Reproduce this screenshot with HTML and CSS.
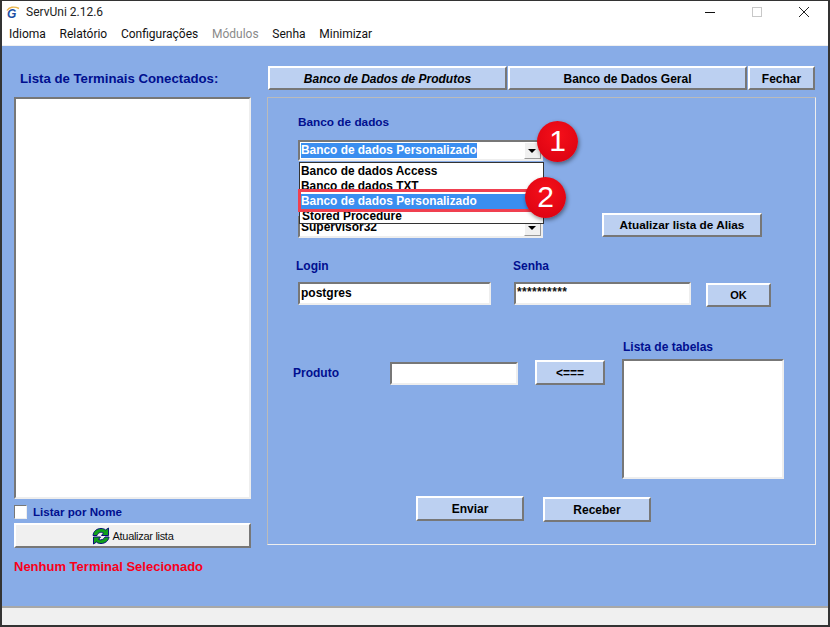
FILE: index.html
```html
<!DOCTYPE html>
<html lang="pt-BR">

<head>
  <meta charset="UTF-8">
  <title>ServUni 2.12.6</title>
  <link rel="stylesheet" href="styles.css">
</head>

<body>
  <div class="window">
    <div class="titlebar">
      <span class="logo">
        <svg width="14" height="14" viewBox="0 0 14 14">
          <path d="M1 5.5 C3 2 8 1 13 3.5" fill="none" stroke="#eab64c" stroke-width="1.4"/>
        </svg>
        <span class="logo-g">G</span>
      </span>
      <span class="title">ServUni 2.12.6</span>
      <div class="caption-btns">
        <svg width="12" height="12" viewBox="0 0 12 12"><path d="M1 6.5H11" stroke="#111" stroke-width="1"/></svg>
        <svg width="12" height="12" viewBox="0 0 12 12"><rect x="1.5" y="1.5" width="9" height="9" fill="none" stroke="#c8c8c8"/></svg>
        <svg width="12" height="12" viewBox="0 0 12 12"><path d="M1 1L11 11M11 1L1 11" stroke="#222" stroke-width="1"/></svg>
      </div>
    </div>
    <div class="menubar">
      <span>Idioma</span>
      <span>Relatório</span>
      <span>Configurações</span>
      <span class="disabled">Módulos</span>
      <span>Senha</span>
      <span>Minimizar</span>
    </div>

    <div class="client">
      <div class="left">
        <h2>Lista de Terminais Conectados:</h2>
        <div class="listbox terminals"></div>
        <label class="check-row">
          <span class="checkbox"></span>
          <span class="check-text">Listar por Nome</span>
        </label>
        <button class="refresh">
          <svg width="18" height="18" viewBox="0 0 18 18">
            <path d="M1 8.5 C1.5 4 5 1.5 9 1.5 C11 1.5 12.5 2 13.5 3 L16.5 1 L16.5 8.5 L9.5 8.5 L11.5 6 C9 4.5 6 5.5 5 8.5 Z" fill="#10a018" stroke="#0a1078" stroke-width="1"/>
            <path d="M17 10 C16.5 14 13 16.5 9 16.5 C7 16.5 5.5 16 4.5 15 L1.5 17 L1.5 10 L8.5 10 L6.5 12.5 C9 13.5 12 12.5 13 10 Z" fill="#10a018" stroke="#0a1078" stroke-width="1"/>
          </svg>
          Atualizar lista
        </button>
        <p class="status-msg">Nenhum Terminal Selecionado</p>
      </div>

      <div class="right">
        <div class="tabs">
          <button class="btn tab-produtos">Banco de Dados de Produtos</button>
          <button class="btn tab-geral">Banco de Dados Geral</button>
          <button class="btn tab-fechar">Fechar</button>
        </div>

        <div class="panel">
          <div class="lbl db-label">Banco de dados</div>
          <div class="select db-select"><span class="sel-text">Banco de dados Personalizado</span><span class="arrow"></span></div>

          <div class="alias-row">
            <div class="select alias-select"><span class="alias-text">Supervisor32</span><span class="arrow"></span></div>
            <button class="btn alias-btn">Atualizar lista de Alias</button>
          </div>

          <div class="login-row">
            <div class="login-col">
              <div class="lbl">Login</div>
              <div class="input login-input">postgres</div>
            </div>
            <div class="senha-col">
              <div class="lbl">Senha</div>
              <div class="input senha-input">**********</div>
            </div>
            <button class="btn ok-btn">OK</button>
          </div>

          <div class="produto-row">
            <div class="lbl produto-lbl">Produto</div>
            <div class="input produto-input"></div>
            <button class="btn back-btn">&lt;===</button>
            <div class="tabelas-col">
              <div class="lbl">Lista de tabelas</div>
              <div class="listbox tabelas"></div>
            </div>
          </div>

          <div class="send-row">
            <button class="btn enviar">Enviar</button>
            <button class="btn receber">Receber</button>
          </div>

          <!-- lista aberta por cima do formulario -->
          <div class="dropdown">
            <div class="opt">Banco de dados Access</div>
            <div class="opt">Banco de dados TXT</div>
            <div class="opt selected">Banco de dados Personalizado</div>
            <div class="opt">Stored Procedure</div>
          </div>
          <div class="marker"></div>
          <div class="badge badge-1">1</div>
          <div class="badge badge-2">2</div>
        </div>
      </div>
    </div>

    <div class="statusbar"></div>
  </div>
</body>

</html>
```

FILE: styles.css
```css
* {
	margin: 0;
	padding: 0;
	box-sizing: border-box;
}

body {
	width: 830px;
	height: 627px;
	overflow: hidden;
	background: #fff;
	font-family: "Liberation Sans", Arial, sans-serif;
	font-size: 12px;
	color: #000;
}

.window {
	width: 830px;
	height: 627px;
	display: flex;
	flex-direction: column;
	border: 2px solid #333;
	border-top-width: 1px;
	border-right-width: 2px;
}

.titlebar {
	height: 22px;
	display: flex;
	align-items: center;
	background: #fff;
	font-family: Roboto, sans-serif;
	padding-left: 4px;
	flex-shrink: 0;
}

.logo {
	width: 14px;
	height: 14px;
	position: relative;
	display: block;
}

.logo-g {
	position: absolute;
	left: 1px;
	top: 2px;
	font: italic bold 12px "Liberation Sans", sans-serif;
	color: #1c4fa4;
}

.title {
	margin-left: 6px;
	font-size: 12px;
	color: #222;
}

.caption-btns {
	margin-left: auto;
	display: flex;
	gap: 35px;
	padding-right: 18px;
}

.menubar {
	height: 23px;
	display: flex;
	align-items: center;
	gap: 13.7px;
	padding-left: 7px;
	background: #fff;
	border-bottom: 1px solid #f0f0f0;
	font-family: Roboto, sans-serif;
	font-size: 12px;
	color: #111;
	flex-shrink: 0;
}

.menubar .disabled {
	color: #8a8a8a;
}

.client {
	flex: 1;
	display: flex;
	background: #88ace7;
}

.left {
	width: 265px;
	padding: 25px 0 0 12px;
}

.left h2 {
	font-size: 13.2px;
	font-weight: bold;
	color: #000f8f;
	height: 16px;
	line-height: 16px;
	margin-left: 6px;
	white-space: nowrap;
}

.listbox {
	background: #fff;
	border: 2px solid;
	border-color: #777 #eee #eee #777;
}

.terminals {
	width: 237px;
	height: 402px;
	margin-top: 10px;
}

.check-row {
	display: flex;
	align-items: center;
	height: 14px;
	margin-top: 6px;
	font-size: 11.6px;
	font-weight: bold;
	color: #000f8f;
}

.check-text {
	margin-top: -2px;
}

.checkbox {
	width: 13px;
	height: 14px;
	background: #fff;
	border: 1px solid;
	border-color: #777 #eee #eee #777;
	margin-right: 6px;
}

.refresh {
	width: 237px;
	height: 25px;
	margin-top: 4px;
	display: flex;
	align-items: center;
	justify-content: center;
	gap: 3px;
	background: #f0f0f0;
	border: 2px solid;
	border-color: #fff #777 #777 #fff;
	font: 11px "Liberation Sans", sans-serif;
	letter-spacing: -0.3px;
	color: #111;
}

.status-msg {
	margin-top: 11px;
	font-size: 13px;
	font-weight: bold;
	color: #f8001a;
	height: 16px;
	line-height: 16px;
}

.right {
	width: 549px;
	padding-top: 20px;
	margin-left: 0;
}

.btn {
	background: #bcd0f1;
	border: 2px solid;
	border-color: #fff #777 #777 #fff;
	font: bold 12px "Liberation Sans", sans-serif;
	color: #000;
	display: block;
	flex-shrink: 0;
}

.tabs {
	display: flex;
	gap: 1px;
	margin-left: 1px;
	height: 24px;
}

.tabs .btn {
	padding-top: 1px;
}

.tab-produtos {
	width: 239px;
	font-style: italic;
}

.tab-geral {
	width: 239px;
}

.tab-fechar {
	width: 67px;
}

.panel {
	position: relative;
	width: 549px;
	height: 448px;
	margin-top: 7px;
	border: 1px solid;
	border-color: #bbb #eee #eee #bbb;
}

.lbl {
	font-weight: bold;
	color: #000f8f;
	height: 14px;
	line-height: 14px;
}

.db-label {
	margin: 17px 0 0 30px;
	font-size: 11.8px;
}

.select {
	width: 245px;
	height: 21px;
	display: flex;
	align-items: center;
	background: #fff;
	border: 2px solid;
	border-color: #777 #eee #eee #777;
	font-weight: bold;
	padding-left: 1px;
}

.db-select {
	margin: 11px 0 0 30px;
}

.sel-text {
	background: #3a8ef0;
	color: #fff;
	line-height: 15px;
	font-size: 11.9px;
}

.arrow {
	margin-left: auto;
	width: 17px;
	height: 17px;
	background: #f0f0f0;
	border: 1px solid;
	border-color: #fff #999 #999 #fff;
	position: relative;
}

.arrow::after {
	content: "";
	position: absolute;
	left: 3px;
	top: 6px;
	border: 4px solid transparent;
	border-top-color: #000;
	border-bottom-width: 0;
}

.alias-row {
	display: flex;
	margin: 52px 0 0 30px;
	align-items: flex-start;
}

.alias-select {
	margin-top: 3px;
	height: 22px;
}

.alias-btn {
	width: 160px;
	height: 24px;
	margin-left: 59px;
	font-size: 11.8px;
}

.login-row {
	display: flex;
	margin: 21px 0 0 28px;
}

.input {
	height: 23px;
	background: #fff;
	border: 2px solid;
	border-color: #777 #eee #eee #777;
	padding-left: 1px;
	font-weight: bold;
	line-height: 18px;
}

.login-col {
	width: 195px;
}

.login-input {
	margin: 9px 0 0 2px;
	width: 193px;
}

.senha-col {
	margin-left: 22px;
}

.senha-input {
	margin: 9px 0 0 1px;
	width: 177px;
	line-height: 16px;
	letter-spacing: 0.35px;
	color: #111;
}

.ok-btn {
	width: 65px;
	height: 24px;
	margin: 24px 0 0 15px;
	font-size: 11px;
}

.produto-row {
	display: flex;
	align-items: flex-start;
	margin: 33px 0 0 25px;
}

.produto-lbl {
	width: 97px;
	margin-top: 26px;
}

.produto-input {
	width: 128px;
	margin-top: 22px;
}

.back-btn {
	width: 70px;
	height: 25px;
	margin: 20px 0 0 17px;
}

.tabelas-col {
	margin-left: 17px;
	width: 162px;
}

.tabelas-col .lbl {
	margin-left: 1px;
}

.tabelas {
	width: 162px;
	height: 120px;
	margin-top: 5px;
}

.send-row {
	display: flex;
	align-items: flex-start;
	margin: 17px 0 0 148px;
}

.enviar,
.receber {
	width: 108px;
	height: 25px;
}

.receber {
	margin: 1px 0 0 19px;
}

.dropdown {
	position: absolute;
	left: 31px;
	top: 64px;
	width: 245px;
	height: 62px;
	background: #fff;
	border: 1px solid #333;
	font-size: 11.9px;
	font-weight: bold;
	padding: 1px 0 0 1px;
}

.opt {
	height: 15px;
	line-height: 15px;
	white-space: nowrap;
}

.opt.selected {
	background: #3a8ef0;
	color: #fff;
	margin-right: 1px;
}

.opt:last-child {
	padding-left: 1px;
}

.marker {
	position: absolute;
	left: 30px;
	top: 91px;
	width: 246px;
	height: 23px;
	border: 3px solid #f04050;
}

.badge {
	position: absolute;
	width: 41px;
	height: 41px;
	border-radius: 50%;
	background: radial-gradient(circle at 50% 35%, #f5101a, #d80010);
	color: #fff;
	font-size: 30px;
	line-height: 40px;
	text-align: center;
	box-shadow: 1px 2px 4px rgba(0, 0, 0, .45);
}

.badge-1 {
	left: 269px;
	top: 23px;
}

.badge-2 {
	left: 257px;
	top: 79px;
}

.statusbar {
	height: 19px;
	background: #f0f0f0;
	border-top: 2px solid #a8a8a8;
	flex-shrink: 0;
}
```
